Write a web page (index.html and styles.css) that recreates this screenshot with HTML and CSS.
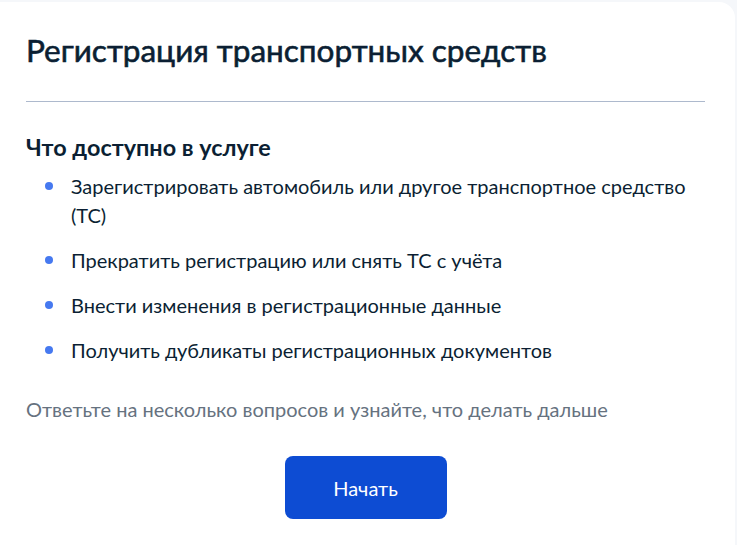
FILE: index.html
```html
<!DOCTYPE html>
<html lang="ru">
<head>
  <meta charset="UTF-8">
  <meta name="viewport" content="width=device-width, initial-scale=1.0">
  <title>Регистрация транспортных средств</title>
  <link rel="stylesheet" href="styles.css">
</head>
<body>
  <div class="card">
    <h1 class="title">Регистрация транспортных средств</h1>
    <hr class="divider">
    <h2 class="subtitle">Что доступно в услуге</h2>
    <ul class="features">
      <li>Зарегистрировать автомобиль или другое транспортное средство (ТС)</li>
      <li>Прекратить регистрацию или снять ТС с учёта</li>
      <li>Внести изменения в регистрационные данные</li>
      <li>Получить дубликаты регистрационных документов</li>
    </ul>
    <p class="hint">Ответьте на несколько вопросов и узнайте, что делать дальше</p>
    <div class="cta">
      <button type="button" class="start">Начать</button>
    </div>
  </div>
</body>
</html>
```

FILE: styles.css
```css
body {
  font-family: Lato, 'Noto Sans', sans-serif;
  background-color: #f5f7fa;
  color: #0b1f33;
  margin: 0;
  padding: 2px 2px 0 0;
}
.card {
  background-color: #ffffff;
  margin-left: -16px;
  padding: 30px 30px 40px 42px;
  border-radius: 16px;
  min-height: 560px;
  box-sizing: border-box;
}
.title {
  margin: 0;
  font-size: 31.5px;
  font-weight: 400;
  line-height: 36px;
  -webkit-text-stroke: 0.6px currentColor;
}
.divider {
  border: none;
  border-top: 1px solid #adb9cd;
  margin: 33px 0 30px;
}
.subtitle {
  margin: 0;
  font-size: 23.4px;
  font-weight: 700;
  line-height: 30px;
}
.features {
  list-style: none;
  margin: 10px 0 0;
  padding: 0 0 0 45px;
}
.features li {
  position: relative;
  font-size: 20px;
  line-height: 29px;
  margin-bottom: 16px;
}
.features li:last-child {
  margin-bottom: 0;
}
.features li::before {
  content: '';
  position: absolute;
  left: -26px;
  top: 10px;
  width: 8px;
  height: 8px;
  border-radius: 50%;
  background-color: #4679f0;
}
.hint {
  margin: 30px 0 0;
  font-size: 20px;
  line-height: 29px;
  color: #66727f;
}
.cta {
  display: flex;
  justify-content: center;
  margin-top: 32px;
}
.start {
  font-family: inherit;
  background-color: #0d4cd3;
  color: #ffffff;
  border: none;
  border-radius: 8px;
  width: 162px;
  height: 63px;
  font-size: 20px;
  cursor: pointer;
}
```
